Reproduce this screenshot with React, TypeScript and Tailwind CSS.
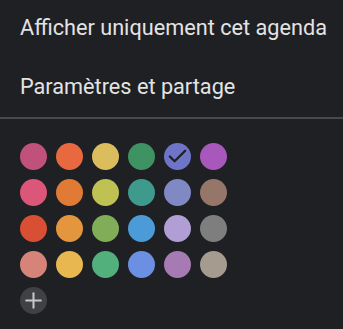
import { Check, Plus } from 'lucide-react';

const colors = [
  ['#c0517a', '#e8683f', '#dbbd5e', '#3f9261', '#6e74c8', '#a857bb'],
  ['#dc5679', '#e07a35', '#bfc152', '#3e9a8c', '#8189c5', '#957668'],
  ['#d94f33', '#e3963d', '#81ad58', '#4b9bd8', '#b09ed4', '#7e7e7e'],
  ['#d6847a', '#e9b74f', '#52b07d', '#6b8fe3', '#a67bb3', '#a59b8f'],
];

export default function App() {
  return (
    <div
      className="w-[343px] h-[329px] bg-[#1f2023] text-[#e3e3e3] overflow-hidden"
      style={{ fontFamily: 'Roboto, "Noto Sans", sans-serif' }}
    >
      <div className="h-[57px] flex items-center px-5 text-[21.7px] whitespace-nowrap">Afficher uniquement cet agenda</div>
      <div className="h-[60px] flex items-center px-5 text-[21.7px] whitespace-nowrap">Paramètres et partage</div>
      <div className="h-[2px] bg-[#48494b]" />
      <div className="pl-5 pt-[24px] flex flex-col gap-[9px]">
        {colors.map((row, i) => (
          <div key={i} className="flex gap-[9px]">
            {row.map((c, j) => (
              <div
                key={j}
                className="w-[27px] h-[27px] rounded-full flex items-center justify-center"
                style={{ backgroundColor: c }}
              >
                {i === 0 && j === 4 && <Check size={23} strokeWidth={2.4} className="text-[#1f2023]" />}
              </div>
            ))}
          </div>
        ))}
        <div className="w-[27px] h-[27px] rounded-full bg-[#404144] flex items-center justify-center">
          <Plus size={25} strokeWidth={2} className="text-[#c4c7c5]" />
        </div>
      </div>
    </div>
  );
}
